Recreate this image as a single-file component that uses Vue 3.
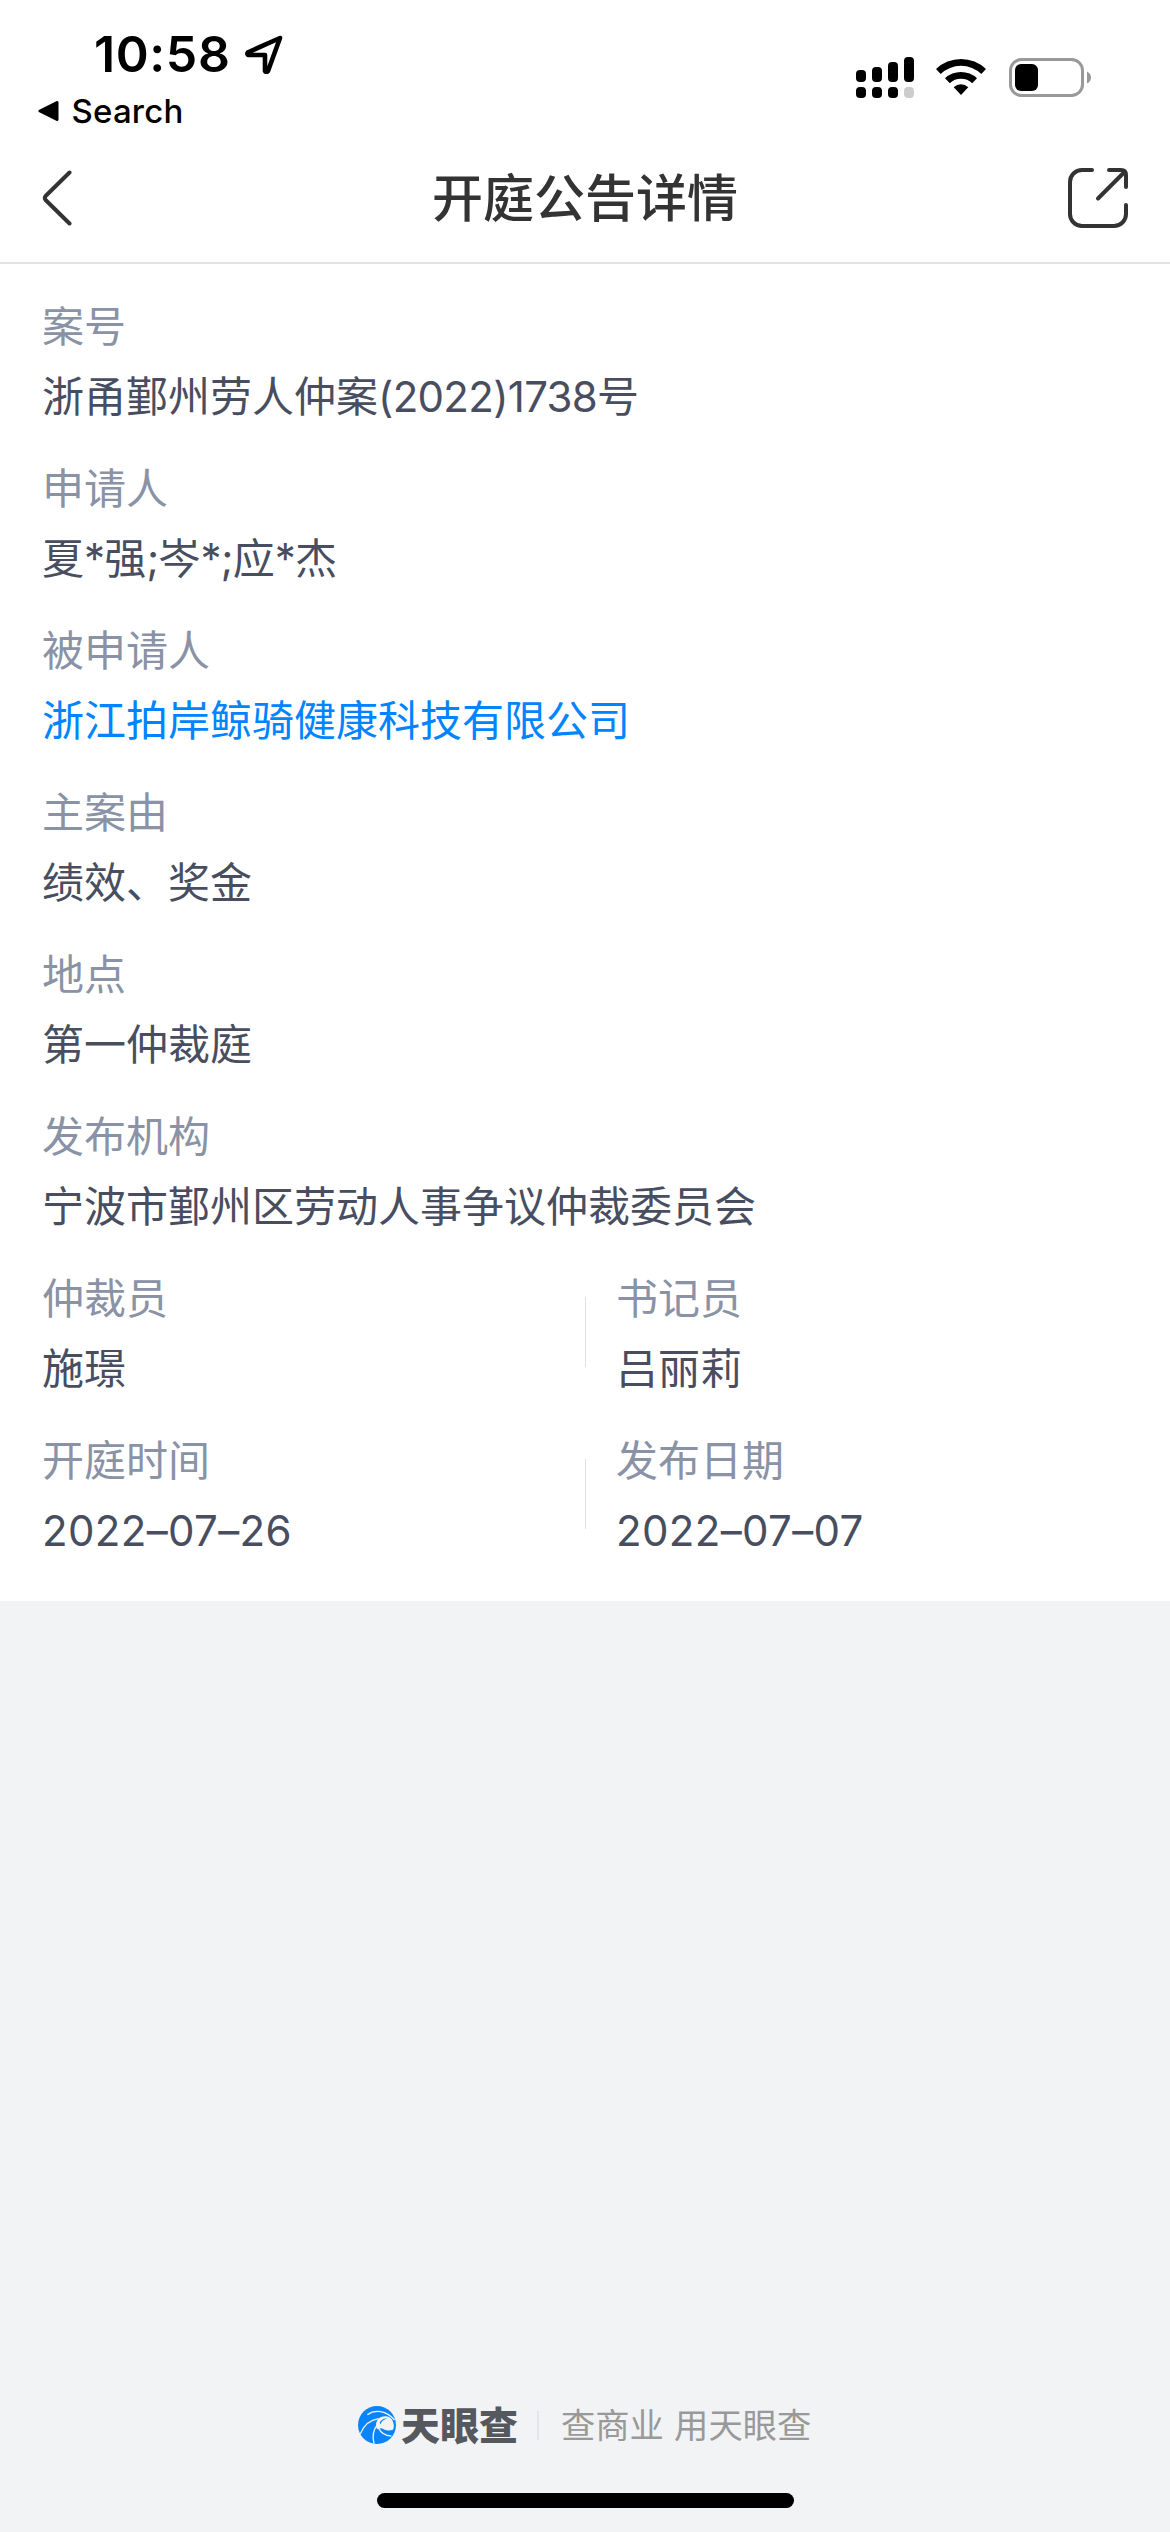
<template>
  <div class="screen">
    <div class="status-bar">
      <div class="status-left">
        <div class="clock">
          <span class="time">10:58</span>
          <svg class="location" viewBox="0 0 40 40">
            <path d="M36 4 L4 18.3 Q2.4 20.2 4.6 21 L21 21 L21 37 Q22 39 24 37 Z" />
          </svg>
        </div>
        <div class="back-app">
          <svg class="triangle" viewBox="0 0 22 22">
            <path d="M2 11 L19 2.5 V19.5 Z" />
          </svg>
          <span>Search</span>
        </div>
      </div>

      <div class="status-right">
        <svg class="signal" viewBox="0 0 58 41">
          <rect x="0" y="13" width="10" height="12" rx="4" />
          <rect x="16" y="10" width="10" height="15" rx="4" />
          <rect x="32" y="5" width="10" height="20" rx="4" />
          <rect x="48" y="0" width="10" height="25" rx="4" />
          <rect x="0" y="30" width="10" height="11" rx="4" />
          <rect x="16" y="30" width="10" height="11" rx="4" />
          <rect x="32" y="30" width="10" height="11" rx="4" />
          <rect class="off" x="48" y="30" width="10" height="11" rx="4" />
        </svg>
        <svg class="wifi" viewBox="0 0 50 38">
          <path d="M0 11 A36 36 0 0 1 50 11 L45.3 16 A29.4 29.4 0 0 0 4.7 16 Z" />
          <path d="M9 20.3 A23.3 23.3 0 0 1 41 20.3 L36.2 25.2 A16.4 16.4 0 0 0 13.8 25.2 Z" />
          <path d="M17.7 29.3 A10.5 10.5 0 0 1 32.3 29.3 L25 37 Z" />
        </svg>
        <svg class="battery" viewBox="0 0 83 40">
          <rect class="shell" x="1.5" y="1.5" width="72" height="36" rx="11" />
          <rect x="6" y="6" width="23" height="27" rx="6" />
          <path class="cap" d="M78 13.5 Q82 15.5 82 19.5 Q82 23.5 78 25.5 Z" />
        </svg>
      </div>
    </div>

    <header class="nav">
      <svg class="back" viewBox="0 0 30 56">
        <path d="M27.5 2.5 L3.6 26 Q2 28 3.6 30 L27.5 53.5" />
      </svg>
      <h1 class="title">开庭公告详情</h1>
      <svg class="share" viewBox="0 0 60 60">
        <path d="M24 2 H14 A12 12 0 0 0 2 14 V46 A12 12 0 0 0 14 58 H46 A12 12 0 0 0 58 46 V37" />
        <path d="M41 2 H53 Q58 2 58 7 V19" />
        <path d="M30 30.5 L56.5 4" />
      </svg>
    </header>

    <main class="card">
      <div class="row" v-for="(row, i) in rows" :key="i">
        <div class="field" v-for="field in row" :key="field.label">
          <div class="label">{{ field.label }}</div>
          <div class="value" :class="field.kind">
            <span
              v-for="(run, n) in runs(field.value)"
              :key="n"
              :class="{ latin: isLatin(run) }"
            >{{ run }}</span>
          </div>
        </div>
      </div>
    </main>

    <footer class="brand">
      <svg class="logo" viewBox="0 0 114 114">
        <circle class="disc" cx="57" cy="57" r="57" />
        <path class="hole" d="M54 60 C53 42 66 29 84 31 C95 32 103 39 105 47 C108 54 109 64 105 71 C96 75 84 74 76 69 C70 66 66 66 62 70 C57 70 54 66 54 60 Z" />
        <path class="disc" d="M65 50 C69 40 80 35 90 38 C82 38 71 43 68 55 Z" />
        <path class="swirl" d="M28 26 C50 10 84 12 110 42" />
        <path class="swirl" d="M7 83 C18 56 36 42 62 38" />
        <path class="swirl" d="M48 113 C42 90 46 70 60 54" />
        <path class="swirl" d="M62 66 C68 80 82 89 100 90" />
      </svg>
      <span class="brand-name">天眼查</span>
      <span class="brand-line"></span>
      <span class="slogan">查商业 用天眼查</span>
    </footer>
    <div class="home-indicator"></div>
  </div>
</template>

<script setup>
const rows = [
  [{ label: "案号", value: "浙甬鄞州劳人仲案(2022)1738号" }],
  [{ label: "申请人", value: "夏*强;岑*;应*杰" }],
  [{ label: "被申请人", value: "浙江拍岸鲸骑健康科技有限公司", kind: "link" }],
  [{ label: "主案由", value: "绩效、奖金" }],
  [{ label: "地点", value: "第一仲裁庭" }],
  [{ label: "发布机构", value: "宁波市鄞州区劳动人事争议仲裁委员会" }],
  [
    { label: "仲裁员", value: "施璟" },
    { label: "书记员", value: "吕丽莉" }
  ],
  [
    { label: "开庭时间", value: "2022–07–26", kind: "date" },
    { label: "发布日期", value: "2022–07–07", kind: "date" }
  ]
];

// split a value into latin and chinese runs, they use different fonts
const runs = (text) => text.match(/[\d()*;–]+|[^\d()*;–]+/g);
const isLatin = (run) => /^[\d()*;–]/.test(run);
</script>

<style>
body {
  background: #f1f3f5;
}
</style>

<style scoped>
.screen {
  display: flex;
  flex-direction: column;
  width: 1170px;
  height: 2532px;
  background: #f1f3f5;
  font-family: "Noto Sans CJK SC", sans-serif;
  overflow: hidden;
}

/* STATUS BAR */
.status-bar {
  display: flex;
  justify-content: space-between;
  height: 132px;
  flex-shrink: 0;
  background: #fff;
  font-family: Inter, sans-serif;
  color: #000;
}

.status-left {
  padding: 24px 0 0 38px;
}

.clock {
  display: flex;
  align-items: center;
  height: 60px;
  padding-left: 56px;
}

.time {
  width: 150px;
  font-size: 50px;
  font-weight: 600;
  letter-spacing: 0.6px;
  white-space: nowrap;
}

.location {
  width: 40px;
  height: 40px;
  fill: none;
  stroke: #000;
  stroke-width: 4.6;
  stroke-linejoin: round;
}

.back-app {
  display: flex;
  align-items: center;
  gap: 11.5px;
  height: 54px;
  font-size: 33px;
  font-weight: 500;
  letter-spacing: 0.2px;
}

.triangle {
  width: 22px;
  height: 22px;
  stroke: #000;
  stroke-width: 3;
  stroke-linejoin: round;
}

.status-right {
  display: flex;
  align-items: flex-start;
  padding: 57px 78px 0 0;
}

.signal {
  width: 58px;
  height: 41px;
}

.signal .off {
  fill: #ccc;
}

.wifi {
  width: 50px;
  height: 38px;
  margin: 1px 23px 0 22px;
}

.battery {
  width: 83px;
  height: 40px;
  margin-top: 1px;
}

.shell {
  fill: none;
  stroke: #999;
  stroke-width: 3;
}

.cap {
  fill: #999;
}

/* NAV */
.nav {
  display: flex;
  align-items: center;
  justify-content: space-between;
  height: 128px;
  flex-shrink: 0;
  padding: 2px 42px 0 42px;
  background: #fff;
  border-bottom: 2px solid #e2e3e4;
}

.back,
.share {
  fill: none;
  stroke: #333;
  stroke-width: 4;
  stroke-linecap: round;
  stroke-linejoin: round;
}

.back {
  width: 30px;
  height: 56px;
  margin-right: 30px;
}

.share {
  width: 60px;
  height: 60px;
}

.title {
  margin: 0 0 7px;
  font-size: 51px;
  font-weight: 500;
  line-height: 72px;
  color: #333;
}

/* DETAILS */
.card {
  display: flex;
  flex-direction: column;
  gap: 22px;
  height: 1312px;
  flex-shrink: 0;
  padding-top: 25px;
  background: #fff;
}

.row {
  display: flex;
}

.field {
  position: relative;
  flex: 1;
  padding-left: 42px;
  font-size: 42px;
  line-height: 70px;
  white-space: nowrap;
}

.field:first-child:not(:last-child) {
  flex: 0 0 543px;
}

.field + .field {
  padding-left: 31px;
}

.field + .field::before {
  content: "";
  position: absolute;
  left: 0;
  top: 36px;
  width: 1px;
  height: 70px;
  background: #dfe1e5;
}

.label {
  color: #8a92a6;
}

.value {
  height: 70px;
  color: #484e5f;
}

.value.link {
  color: #0084ff;
}

.latin {
  font-family: Inter, sans-serif;
  letter-spacing: -0.7px;
}

.date .latin {
  letter-spacing: 0.35px;
}

/* FOOTER */
.brand {
  display: flex;
  align-items: center;
  height: 60px;
  flex-shrink: 0;
  margin-top: auto;
  padding-left: 358px;
}

.logo {
  width: 38px;
  height: 38px;
}

.disc {
  fill: #0a84fb;
}

.hole {
  fill: #f1f3f5;
}

.swirl {
  fill: none;
  stroke: #f1f3f5;
  stroke-width: 4;
}

.brand-name {
  margin: 0 0 4px 5px;
  font-size: 39px;
  font-weight: 900;
  line-height: 56px;
  color: #55585c;
}

.brand-line {
  width: 2px;
  height: 29px;
  margin: 0 22px 0 19px;
  background: #e2e5ea;
}

.slogan {
  margin-bottom: 4px;
  font-size: 34.3px;
  line-height: 56px;
  word-spacing: 2.5px;
  color: #999;
  white-space: nowrap;
}

.home-indicator {
  width: 417px;
  height: 15px;
  flex-shrink: 0;
  margin: 38px auto 24px;
  border-radius: 8px;
  background: #000;
}
</style>
